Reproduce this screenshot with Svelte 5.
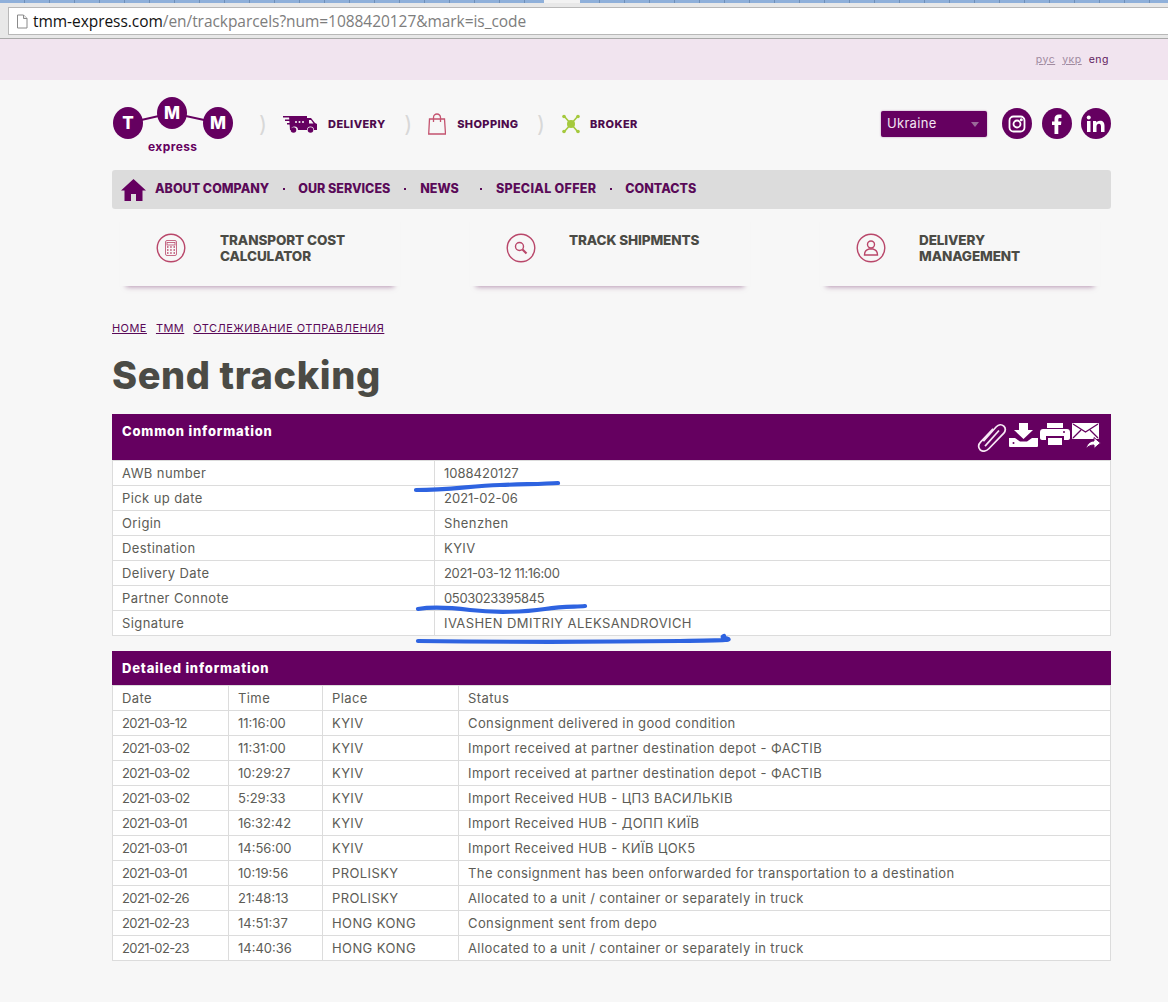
<script>
  const common = [
    ['AWB number', '1088420127', 'plain'],
    ['Pick up date', '2021-02-06', 'plain'],
    ['Origin', 'Shenzhen', ''],
    ['Destination', 'KYIV', ''],
    ['Delivery Date', '2021-03-12 11:16:00', 'num'],
    ['Partner Connote', '0503023395845', 'num'],
    ['Signature', 'IVASHEN DMITRIY ALEKSANDROVICH', '']
  ];
  const detail = [
    ['2021-03-12', '11:16:00', 'KYIV', 'Consignment delivered in good condition'],
    ['2021-03-02', '11:31:00', 'KYIV', 'Import received at partner destination depot - ФАСТІВ'],
    ['2021-03-02', '10:29:27', 'KYIV', 'Import received at partner destination depot - ФАСТІВ'],
    ['2021-03-02', '5:29:33', 'KYIV', 'Import Received HUB - ЦПЗ ВАСИЛЬКІВ'],
    ['2021-03-01', '16:32:42', 'KYIV', 'Import Received HUB - ДОПП КИЇВ'],
    ['2021-03-01', '14:56:00', 'KYIV', 'Import Received HUB - КИЇВ ЦОК5'],
    ['2021-03-01', '10:19:56', 'PROLISKY', 'The consignment has been onforwarded for transportation to a destination'],
    ['2021-02-26', '21:48:13', 'PROLISKY', 'Allocated to a unit / container or separately in truck'],
    ['2021-02-23', '14:51:37', 'HONG KONG', 'Consignment sent from depo'],
    ['2021-02-23', '14:40:36', 'HONG KONG', 'Allocated to a unit / container or separately in truck']
  ];
</script>

<div class="page">
  <div class="tabstrip"></div>
  <div class="urlbar">
    <div class="urlbox">
      <svg class="doc" width="12" height="15" viewBox="0 0 12 15"><path d="M1.5 1h6l3.500 3.500V14h-9.500z" fill="#fff" stroke="#8a8a8a"/><path d="M7.500 1v3.500H11" fill="#e8e8e8" stroke="#8a8a8a"/></svg>
      <span class="host">tmm-express.com</span><span class="path">/en/trackparcels?num=1088420127&amp;mark=is_code</span>
    </div>
  </div>
  <div class="langbar">
    <div class="langs">
      <a href="#ru">рус</a>
      <a href="#uk">укр</a>
      <span>eng</span>
    </div>
  </div>

  <div class="wrap">
    <header class="top">
      <div class="logo">
        <svg width="122" height="58" viewBox="0 0 122 58">
          <path d="M16 26L60 16L106 26" fill="none" stroke="#650060" stroke-width="2"/>
          <ellipse cx="16" cy="26" rx="15" ry="16" fill="#650060"/>
          <ellipse cx="60" cy="16" rx="15" ry="16" fill="#650060"/>
          <ellipse cx="106" cy="26" rx="15" ry="16" fill="#650060"/>
          <text x="16" y="32" class="logo-letter">T</text>
          <text x="60" y="22" class="logo-letter">M</text>
          <text x="106" y="32" class="logo-letter">M</text>
        </svg>
        <span class="express">express</span>
      </div>

      <div class="modes">
        <span class="sep">)</span>
        <svg class="mode-icon" width="34" height="18" viewBox="0 0 34 18">
          <path d="M0 1h8v1.500H0zM2 4.500h6V6H2zM4 8h5v1.500H4z" fill="#650060"/>
          <path d="M6 1h18v2h4l4 5 2 1v6h-3a3.500 3.500 0 0 0-7 0h-9a3.500 3.500 0 0 0-7 0H7z" fill="#650060"/>
          <circle cx="10.500" cy="15" r="2.800" fill="#650060"/>
          <circle cx="27.500" cy="15" r="2.800" fill="#650060"/>
          <circle cx="13" cy="7" r="1" fill="#f7f7f7"/><circle cx="16.500" cy="7" r="1" fill="#f7f7f7"/><circle cx="20" cy="7" r="1" fill="#f7f7f7"/>
          <path d="M26 5h2l2.500 3.500H26z" fill="#f7f7f7"/>
        </svg>
        <span class="mode">DELIVERY</span>
        <span class="sep">)</span>
        <svg class="mode-icon" width="18" height="22" viewBox="0 0 18 22">
          <path d="M1.500 6h15l1 15H.7z" fill="none" stroke="#c4536f" stroke-width="1.300"/>
          <path d="M5.500 9V4.500a3.500 3.500 0 0 1 7 0V9" fill="none" stroke="#c4536f" stroke-width="1.300"/>
        </svg>
        <span class="mode">SHOPPING</span>
        <span class="sep">)</span>
        <svg class="mode-icon broker" width="20" height="20" viewBox="0 0 20 20">
          <path d="M3 2l14 16M17 2L3 18" stroke="#a5c93d" stroke-width="1.600"/>
          <circle cx="10" cy="10" r="4" fill="#a5c93d"/>
          <circle cx="3" cy="2.500" r="1.800" fill="#a5c93d"/><circle cx="17" cy="2.500" r="1.800" fill="#a5c93d"/>
          <circle cx="3" cy="17.500" r="1.800" fill="#a5c93d"/><circle cx="17" cy="17.500" r="1.800" fill="#a5c93d"/>
        </svg>
        <span class="mode">BROKER</span>
      </div>

      <div class="top-right">
        <div class="country">Ukraine<i class="caret"></i></div>
        <div class="socials">
          <span class="social">
            <svg width="18" height="18" viewBox="0 0 18 18" fill="none" stroke="#fff" stroke-width="1.800"><rect x="1.500" y="1.500" width="15" height="15" rx="4"/><circle cx="9" cy="9" r="3.500"/><circle cx="13.300" cy="4.700" r=".6" fill="#fff"/></svg>
          </span>
          <span class="social">
            <svg width="12" height="20" viewBox="0 0 12 20"><path d="M3.500 20V11H1V7.500h2.500V5c0-3 1.700-4.500 4.300-4.500H10.500V4H8.700C7.600 4 7.300 4.600 7.300 5.500v2h3.100L10 11H7.300v9z" fill="#fff"/></svg>
          </span>
          <span class="social">
            <svg width="20" height="18" viewBox="0 0 20 18"><path d="M1 6h3.500v11H1zM7 6h3.300v1.600C11 6.500 12.300 5.700 14 5.700c3.200 0 4.500 2 4.500 5.100V17H15v-5.500c0-1.700-.6-2.800-2-2.800-1.500 0-2.500 1.100-2.500 2.900V17H7z" fill="#fff"/><circle cx="2.750" cy="2.500" r="2" fill="#fff"/></svg>
          </span>
        </div>
      </div>
    </header>

    <nav class="mainnav">
      <svg class="home" width="25" height="22" viewBox="0 0 25 22"><path d="M12.500 0L25 11.500h-3.500V22H15v-7h-5v7H3.500V11.500H0z" fill="#650060"/></svg>
      <a href="#about">ABOUT COMPANY</a>
      <i class="dot"></i>
      <a href="#services">OUR SERVICES</a>
      <i class="dot"></i>
      <a href="#news" class="news">NEWS</a>
      <i class="dot"></i>
      <a href="#offer" class="wide">SPECIAL OFFER</a>
      <i class="dot"></i>
      <a href="#contacts">CONTACTS</a>
    </nav>

    <div class="services">
      <div class="service">
        <svg width="30" height="30" viewBox="0 0 30 30" fill="none" stroke="#b9476a">
          <circle cx="15" cy="15" r="13.800" stroke-width="1.400"/>
          <rect x="9.500" y="7.500" width="11" height="15" rx="1.500" stroke-width=".8"/>
          <rect x="11" y="9.500" width="8" height="2.500" stroke-width=".8"/>
          <path d="M11 14h1.500M14.200 14h1.500M17.500 14h1.500M11 17h1.500M14.200 17h1.500M17.500 17h1.500M11 20h1.500M14.200 20h1.500M17.500 20h1.500" stroke-width="1.300"/>
        </svg>
        <p>TRANSPORT COST<br />CALCULATOR</p>
      </div>
      <div class="service">
        <svg width="30" height="30" viewBox="0 0 30 30" fill="none" stroke="#b9476a">
          <circle cx="15" cy="15" r="13.800" stroke-width="1.400"/>
          <circle cx="13.500" cy="13.500" r="4" stroke-width="1.400"/>
          <path d="M16.500 16.500l4 4" stroke-width="2.200"/>
        </svg>
        <p>TRACK SHIPMENTS</p>
      </div>
      <div class="service">
        <svg width="30" height="30" viewBox="0 0 30 30" fill="none" stroke="#b9476a">
          <circle cx="15" cy="15" r="13.800" stroke-width="1.400"/>
          <circle cx="15" cy="11.500" r="3.500" stroke-width="1.400"/>
          <path d="M8.500 22c0-3.500 2.500-5.500 4.500-6h4c2 .5 4.500 2.500 4.500 6z" stroke-width="1.400"/>
        </svg>
        <p>DELIVERY<br />MANAGEMENT</p>
      </div>
    </div>

    <div class="crumbs">
      <a href="#home">HOME</a>
      <a href="#tmm">ТММ</a>
      <a href="#track">ОТСЛЕЖИВАНИЕ ОТПРАВЛЕНИЯ</a>
    </div>

    <h1>Send tracking</h1>

    <section class="block first">
      <div class="block-head tall">
        <strong>Common information</strong>
        <div class="tools">
          <svg width="30" height="29" viewBox="3 1 26 27" fill="none" stroke="#f7e8f5" stroke-width="1.600"><path d="M8 18L20 4.500c2-2 5-2.500 7-.5s1.500 4.500 0 6.500L13 25c-2.500 2.500-6 3-8 1s-2-5 .5-7.500L17 6.500"/><path d="M9.500 22.500L22.500 8"/></svg>
          <svg width="29" height="24" viewBox="0 0 29 24" fill="#fff"><path d="M10 0h9v7h5l-9.500 9L5 7h5z"/><path d="M0 15h6l5 3.500h7L23 15h6v8a1 1 0 0 1-1 1H1a1 1 0 0 1-1-1z"/><circle cx="4.500" cy="20" r="1" fill="#650060"/></svg>
          <svg width="30" height="22" viewBox="0 0 30 22" fill="#fff"><path d="M7 0h16v5H7z"/><path d="M3 6h24c1.700 0 3 1.300 3 3v6c0 1.200-1 2-2 2h-4v-4H6v4H2c-1 0-2-.8-2-2V9c0-1.700 1.300-3 3-3z"/><path d="M8 15h14v7H8z"/><circle cx="24" cy="9" r="1" fill="#650060"/></svg>
          <svg width="29" height="27" viewBox="0 0 29 27"><rect y="0" width="27" height="16" rx="1" fill="#fff"/><path d="M1 1l12.500 8L26 1M1 15l8-8M26 15l-8-8" stroke="#650060" fill="none" stroke-width="1.300"/><path d="M14 26c1-5 4-8 8-8v-3.500l6.500 5.500-6.500 5.500V22c-3 0-6 1-8 4z" fill="#fff" stroke="#650060"/></svg>
        </div>
      </div>
      <table>
        <colgroup><col class="c-label" /><col /></colgroup>
        <tbody>
          {#each common as [label, value, kind]}
            <tr><td>{label}</td><td class={kind}>{value}</td></tr>
          {/each}
        </tbody>
      </table>
    </section>

    <section class="block second">
      <div class="block-head">
        <strong>Detailed information</strong>
      </div>
      <table>
        <colgroup><col class="c-date" /><col class="c-time" /><col class="c-place" /><col /></colgroup>
        <tbody>
          <tr><td>Date</td><td>Time</td><td>Place</td><td>Status</td></tr>
          {#each detail as row}
            <tr>
              <td class="date">{row[0]}</td>
              <td class="plain">{row[1]}</td>
              <td>{row[2]}</td>
              <td>{row[3]}</td>
            </tr>
          {/each}
        </tbody>
      </table>
    </section>
  </div>

  <svg class="pen" width="1168" height="1002" viewBox="0 0 1168 1002" fill="none" stroke="#2e63e0" stroke-width="4.200" stroke-linecap="round">
    <path d="M416 490C450 490 470 486 500 485S545 484 558 483"/>
    <path d="M418 609C430 607 445 607 470 610S525 612 545 609S575 607 585 606"/>
    <path d="M418 641C500 642 600 642 680 641S715 639 724 636"/>
  </svg>
</div>

<style>
  :global(body) {
    margin: 0;
    background: #f7f7f7;
  }

  .page {
    position: relative;
    width: 1168px;
    height: 1002px;
    overflow: hidden;
    font-family: Inter, "Noto Sans", sans-serif;
    color: #4b4b45;
  }

  .tabstrip {
    height: 3px;
    background:
      linear-gradient(90deg, transparent 544px, #f2f2f2 544px, #f2f2f2 580px, transparent 580px),
      repeating-linear-gradient(90deg, #8fb0da 0, #8fb0da 24px, #6f8fb8 24px, #6f8fb8 25px);
  }

  .urlbar {
    height: 36px;
    padding: 4px 0 0 8px;
    box-sizing: border-box;
    background: #e8e8e8;
    border-bottom: 1px solid #a9a9a9;
  }

  .urlbox {
    display: flex;
    align-items: center;
    height: 26px;
    padding-left: 7px;
    background: #fff;
    border: 1px solid #b8b8b8;
    border-right: 0;
    font-family: "Open Sans", sans-serif;
    font-size: 15.500px;
    letter-spacing: -0.05px;
  }

  .doc {
    margin-right: 5px;
  }

  .host {
    color: #111;
  }

  .path {
    color: #7d7d7d;
  }

  .langbar {
    display: flex;
    justify-content: flex-end;
    align-items: center;
    height: 41px;
    padding-right: 59px;
    background: #f1e4ef;
    font-size: 10.500px;
    letter-spacing: .5px;
  }

  .langs {
    display: flex;
    gap: 7px;
    margin-top: -1px;
    color: #5f1a5e;
  }

  .langs a {
    color: #a08aa0;
    text-decoration: underline;
  }

  .wrap {
    width: 999px;
    margin-left: 112px;
  }

  .top {
    display: flex;
    align-items: flex-start;
    height: 90px;
  }

  .logo {
    position: relative;
    width: 122px;
    height: 75px;
    padding-top: 17px;
    box-sizing: border-box;
  }

  .logo svg {
    display: block;
  }

  .logo-letter {
    font-size: 17px;
    font-weight: 800;
    fill: #fff;
    text-anchor: middle;
  }

  .express {
    position: absolute;
    top: 59px;
    left: 36px;
    font-size: 12px;
    font-weight: 700;
    letter-spacing: .4px;
    color: #650060;
  }

  .modes {
    display: flex;
    align-items: center;
    height: 20px;
    margin-top: 34px;
    margin-left: 25px;
  }

  .sep {
    font-size: 22px;
    color: #d8d8d8;
    margin-right: 16px;
  }

  .mode-icon {
    margin-right: 11px;
  }

  .broker {
    margin-right: 9px;
  }

  .mode {
    font-size: 11px;
    font-weight: 800;
    color: #4d0a4c;
    margin-right: 18.500px;
    letter-spacing: .4px;
  }

  .top-right {
    display: flex;
    align-items: center;
    margin-left: auto;
    margin-top: 28px;
    gap: 15px;
  }

  .country {
    position: relative;
    width: 106px;
    height: 26px;
    padding-left: 6px;
    box-sizing: border-box;
    background: #650060;
    border-radius: 2px;
    box-shadow: 0 0 2px #b486b2;
    color: #f3e6f2;
    font-size: 13px;
    letter-spacing: .3px;
    line-height: 25px;
  }

  .caret {
    position: absolute;
    right: 8px;
    top: 11px;
    border: 4px solid transparent;
    border-top: 5px solid #9a6a99;
    border-bottom: 0;
  }

  .socials {
    display: flex;
    gap: 9.500px;
  }

  .social {
    display: flex;
    align-items: center;
    justify-content: center;
    width: 30px;
    height: 31px;
    border-radius: 50%;
    background: #650060;
  }

  .mainnav {
    display: flex;
    align-items: center;
    height: 39px;
    padding: 0 0 2px 9px;
    box-sizing: border-box;
    background: #dcdcdc;
    border-radius: 3px;
    font-size: 12.500px;
    font-weight: 800;
  }

  .mainnav a {
    color: #5a0a58;
    text-decoration: none;
  }

  .home {
    margin: 2px 9px 0 0;
  }

  .dot {
    width: 2px;
    height: 2px;
    margin: 0 13.500px;
    background: #5a0a58;
  }

  .news {
    margin: 0 8px 0 1px;
  }

  .mainnav .wide {
    letter-spacing: .3px;
  }

  .services {
    display: flex;
    gap: 70px;
    padding-left: 8px;
    height: 81px;
  }

  .service {
    display: flex;
    align-items: flex-start;
    width: 280px;
    height: 77px;
    padding: 24px 0 0 36px;
    box-sizing: border-box;
    box-shadow: 0 7px 5px -6px rgba(130, 70, 120, .55);
  }

  .service p {
    margin: -1px 0 0 34px;
    font-size: 13.500px;
    line-height: 16px;
    font-weight: 800;
    color: #4b4b45;
    letter-spacing: -0.1px;
  }

  .service + .service p {
    margin-left: 33px;
  }

  .crumbs {
    display: flex;
    gap: 9px;
    margin-top: 31px;
    height: 14px;
    font-size: 11px;
    line-height: 14px;
    letter-spacing: .45px;
  }

  .crumbs a {
    color: #5a0a58;
    text-decoration: underline;
  }

  h1 {
    margin: 18px 0 0;
    height: 44px;
    font-size: 38px;
    line-height: 44px;
    font-weight: 800;
    letter-spacing: .6px;
    color: #4b4b45;
  }

  .block {
    background: #fff;
  }

  .first {
    margin-top: 17px;
  }

  .second {
    margin-top: 15px;
  }

  .block-head {
    position: relative;
    height: 34px;
    padding: 0 10px;
    background: #650060;
    color: #fff;
    font-size: 13px;
    letter-spacing: .8px;
    line-height: 34px;
  }

  .block-head.tall {
    height: 46px;
    line-height: 35px;
  }

  .block-head strong {
    font-weight: 800;
  }

  .tools {
    position: absolute;
    top: 9px;
    right: 10px;
    display: flex;
    align-items: flex-start;
    gap: 2px;
  }

  table {
    width: 100%;
    table-layout: fixed;
    border-collapse: collapse;
    font-size: 13px;
    color: #5c5c56;
  }

  td {
    height: 25px;
    padding: 0 9px;
    box-sizing: border-box;
    border: 1px solid #dcdcdc;
    white-space: nowrap;
    letter-spacing: .4px;
  }

  td.plain {
    letter-spacing: 0;
  }

  td.num {
    letter-spacing: -0.35px;
  }

  td.date {
    letter-spacing: -0.6px;
  }

  .c-label {
    width: 322px;
  }

  .c-date {
    width: 116px;
  }

  .c-time {
    width: 94px;
  }

  .c-place {
    width: 136px;
  }

  .pen {
    position: absolute;
    top: 0;
    left: 0;
    pointer-events: none;
  }
</style>
